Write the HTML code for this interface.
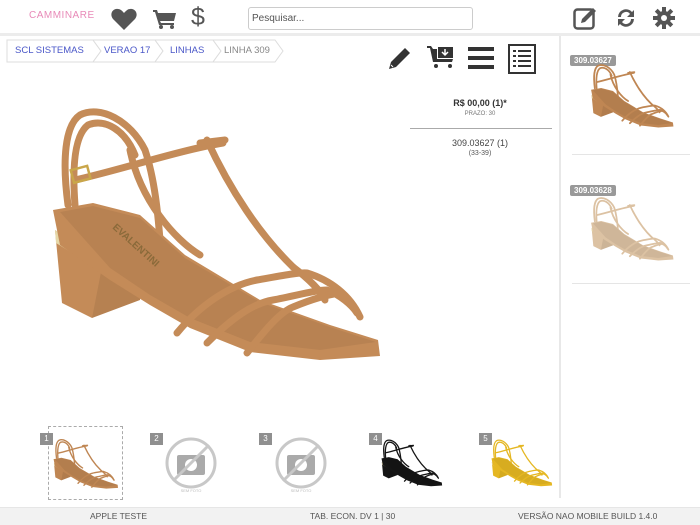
<!DOCTYPE html>
<html><head><meta charset="utf-8"><style>
*{margin:0;padding:0;box-sizing:border-box}
body{width:700px;height:525px;background:#fff;font-family:"Liberation Sans",sans-serif;position:relative;overflow:hidden}
.abs{position:absolute}
.hdr{left:0;top:0;width:700px;height:36px;background:#fff;border-bottom:3px solid #ececec}
.search{left:248px;top:7px;width:225px;height:23px;border:1px solid #ccc;border-radius:3px;font-size:10px;color:#555;padding:5px 3px}
.bc{top:40px;height:22px;font-size:9.5px;line-height:22px;color:#4a57c8}
.side{left:559px;top:36px;width:2px;height:462px;background:#e8e8e8}
.tag{background:#999;color:#fff;font-size:8px;font-weight:bold;border-radius:2px;padding:1px 4px}
.num{background:#8f8f8f;color:#fff;font-size:8px;width:13px;height:12px;text-align:center;line-height:12px}
.foot{left:0;top:507px;width:700px;height:18px;background:#f2f2f2;border-top:1px solid #e6e6e6;font-size:8.5px;color:#555;line-height:17px}
</style></head><body>
<svg width="0" height="0" style="position:absolute"><defs>
<symbol id="shoe" viewBox="45 100 345 270">
<g fill="none" stroke="currentColor" stroke-width="7" stroke-linecap="round">
<path d="M68 205C62 160 65 125 80 115C100 105 130 120 145 150C155 180 158 215 160 240"/>
<path d="M75 205C72 165 75 135 88 125C105 118 125 130 135 155"/>
<path d="M75 180C120 170 180 150 223 143"/>
</g>
<path d="M55 230L103 262 140 250 140 300 92 318 62 303z" fill="currentColor"/>
<path d="M103 262L140 250 140 300 92 318z" fill="#000" opacity=".07"/>
<path d="M55 230L103 262 103 272 56 243z" fill="#e6d8a8"/>
<path d="M53 210L93 203 140 215 185 255 260 300 330 325 378 340 380 356 320 360 250 352 190 328 150 305 110 280 60 245z" fill="currentColor"/>
<path d="M60 212L93 206 140 218 185 258 260 302 330 327 376 342 320 350 250 342 190 318 150 295 110 268z" fill="#000" opacity=".06"/>
<g fill="none" stroke="currentColor" stroke-width="7" stroke-linecap="round">
<path d="M130 150C140 200 175 240 200 255"/>
<path d="M207 140C230 190 260 235 293 267"/>
<path d="M200 143L225 140"/>
<path d="M177 333C200 305 230 285 257 280C280 276 300 272 307 273C330 280 350 295 360 317"/>
<path d="M207 343C235 315 255 303 273 300C295 296 315 290 327 290C340 295 352 305 357 313"/>
<path d="M247 353C265 330 280 312 293 307C310 300 325 295 340 293"/>
<path d="M293 267C310 280 320 290 325 300"/>
</g>
</symbol></defs></svg>

<div class="abs hdr"></div>
<div class="abs" style="left:29px;top:10px;font-size:10px;color:#e88ab8;letter-spacing:.5px">CAMMINARE</div>
<svg class="abs" style="left:111px;top:8px" width="26" height="22" viewBox="0 0 26 22"><path d="M13 22L2 11C-2 6 2 0 7 1c3 0 5 3 6 4 1-1 3-4 6-4 5-1 9 5 5 10z" fill="#555"/></svg>
<svg class="abs" style="left:153px;top:9px" width="24" height="20" viewBox="0 0 24 20"><path d="M0 1h4l1 3h18l-2 8H7l1 2h13v2H6L2 3H0z" fill="#555"/><circle cx="8" cy="18" r="2" fill="#555"/><circle cx="19" cy="18" r="2" fill="#555"/></svg>
<div class="abs" style="left:191px;top:3px;font-size:25px;color:#555">$</div>
<div class="abs search">Pesquisar...</div>
<svg class="abs" style="left:573px;top:6px" width="26" height="24" viewBox="0 0 26 24"><rect x="1.5" y="3.5" width="19" height="19" rx="3" fill="none" stroke="#555" stroke-width="2.5"/><path d="M8 17l1-4 11-11 3 3-11 11z" fill="#555"/></svg>
<svg class="abs" style="left:614px;top:6px" width="24" height="24" viewBox="0 0 24 24"><path d="M4 11a8 8 0 0 1 14-5l2-2v7h-7l3-3a5 5 0 0 0-9 3zM20 13a8 8 0 0 1-14 5l-2 2v-7h7l-3 3a5 5 0 0 0 9-3z" fill="#555"/></svg>
<svg class="abs" style="left:653px;top:7px" width="22" height="22" viewBox="0 0 22 22"><g fill="#555"><circle cx="11" cy="11" r="7"/><rect x="9" y="0" width="4" height="22"/><rect x="0" y="9" width="22" height="4"/><rect x="9" y="0" width="4" height="22" transform="rotate(45 11 11)"/><rect x="9" y="0" width="4" height="22" transform="rotate(-45 11 11)"/></g><circle cx="11" cy="11" r="3" fill="#fff"/></svg>

<svg class="abs" style="left:6px;top:39px" width="280" height="24"><g fill="#fff" stroke="#ddd"><path d="M1 1h86l8 11-8 11H1z"/><path d="M87 1h62l8 11-8 11H87l8-11z"/><path d="M149 1h58l8 11-8 11h-58l8-11z"/><path d="M207 1h62l8 11-8 11h-62l8-11z"/></g></svg>
<div class="abs bc" style="left:15px">SCL SISTEMAS</div>
<div class="abs bc" style="left:104px">VERAO 17</div>
<div class="abs bc" style="left:170px">LINHAS</div>
<div class="abs bc" style="left:224px;color:#888">LINHA 309</div>

<svg class="abs" style="left:387px;top:45px" width="26" height="26" viewBox="0 0 26 26"><path d="M2 24l2-7L18 3l5 5L9 22z" fill="#333"/><path d="M4 20l2 2" stroke="#fff"/></svg>
<svg class="abs" style="left:427px;top:44px" width="28" height="26" viewBox="0 0 28 26"><path d="M0 2h4l2 3h4v10h16l-1 3H6L3 4H0z" fill="#333"/><rect x="11" y="3" width="15" height="11" fill="#333"/><path d="M18 5v6M15 8l3 3 3-3" stroke="#fff" stroke-width="1.5" fill="none"/><circle cx="9" cy="22" r="2" fill="#333"/><circle cx="23" cy="22" r="2" fill="#333"/></svg>
<svg class="abs" style="left:468px;top:47px" width="26" height="22"><rect y="0" width="26" height="4" fill="#333"/><rect y="9" width="26" height="4" fill="#333"/><rect y="18" width="26" height="4" fill="#333"/></svg>
<svg class="abs" style="left:508px;top:44px" width="28" height="30"><rect x="1" y="1" width="26" height="28" fill="none" stroke="#333" stroke-width="2"/><g fill="#333"><rect x="5" y="6" width="3" height="2"/><rect x="10" y="6" width="13" height="2"/><rect x="5" y="11" width="3" height="2"/><rect x="10" y="11" width="13" height="2"/><rect x="5" y="16" width="3" height="2"/><rect x="10" y="16" width="13" height="2"/><rect x="5" y="21" width="3" height="2"/><rect x="10" y="21" width="13" height="2"/></g></svg>

<div class="abs" style="left:410px;top:98px;width:140px;text-align:center;font-size:9px;font-weight:bold;color:#333">R$ 00,00 (1)*</div>
<div class="abs" style="left:410px;top:111px;width:140px;text-align:center;font-size:6px;color:#777">PRAZO: 30</div>
<div class="abs" style="left:410px;top:128px;width:142px;height:1px;background:#aaa"></div>
<div class="abs" style="left:410px;top:138px;width:140px;text-align:center;font-size:9px;color:#444">309.03627 (1)</div>
<div class="abs" style="left:410px;top:150px;width:140px;text-align:center;font-size:7px;color:#555">(33-39)</div>

<!-- main shoe -->
<svg class="abs" style="left:45px;top:100px;color:#c48b58" width="345" height="270"><use href="#shoe"/></svg>
<svg class="abs" style="left:0;top:0" width="400" height="380">
<rect x="72" y="168" width="17" height="13" fill="none" stroke="#c9a64a" stroke-width="2.5" transform="rotate(-15 80 174)"/>
<text x="112" y="228" font-size="10" font-weight="bold" fill="#8a6a3a" transform="rotate(42 112 228)">EVALENTINI</text>
</svg>

<div class="abs side"></div>
<div class="abs" style="left:570px;top:50px"><span class="tag">309.03627</span></div>
<svg class="abs" style="left:585px;top:62px;color:#bf8653" width="95" height="68"><use href="#shoe"/></svg>
<div class="abs" style="left:572px;top:154px;width:118px;height:1px;background:#e5e5e5"></div>
<div class="abs" style="left:570px;top:180px"><span class="tag">309.03628</span></div>
<svg class="abs" style="left:585px;top:195px;color:#dcc2a3" width="95" height="68"><use href="#shoe"/></svg>
<div class="abs" style="left:572px;top:283px;width:118px;height:1px;background:#e5e5e5"></div>

<!-- thumbnails -->
<div class="abs" style="left:48px;top:426px;width:75px;height:74px;border:1px dashed #aaa"></div>
<div class="abs num" style="left:40px;top:433px">1</div>
<div class="abs num" style="left:150px;top:433px">2</div>
<div class="abs num" style="left:259px;top:433px">3</div>
<div class="abs num" style="left:369px;top:433px">4</div>
<div class="abs num" style="left:479px;top:433px">5</div>
<svg class="abs" style="left:52px;top:437px;color:#bf8653" width="68" height="54"><use href="#shoe"/></svg>
<svg class="abs" style="left:380px;top:437px;color:#151515" width="64" height="52"><use href="#shoe"/></svg>
<svg class="abs" style="left:490px;top:437px;color:#e5b722" width="64" height="52"><use href="#shoe"/></svg>
<svg class="abs" style="left:163px;top:437px" width="56" height="56" viewBox="0 0 56 56"><circle cx="28" cy="26" r="24" fill="none" stroke="#c8c8c8" stroke-width="3"/><rect x="14" y="18" width="28" height="20" rx="2" fill="#aaa"/><circle cx="28" cy="28" r="6" fill="#fff"/><path d="M10 44L46 8" stroke="#c8c8c8" stroke-width="3"/><text x="28" y="55" font-size="4" fill="#bbb" text-anchor="middle">SEM FOTO</text></svg>
<svg class="abs" style="left:273px;top:437px" width="56" height="56" viewBox="0 0 56 56"><circle cx="28" cy="26" r="24" fill="none" stroke="#c8c8c8" stroke-width="3"/><rect x="14" y="18" width="28" height="20" rx="2" fill="#aaa"/><circle cx="28" cy="28" r="6" fill="#fff"/><path d="M10 44L46 8" stroke="#c8c8c8" stroke-width="3"/><text x="28" y="55" font-size="4" fill="#bbb" text-anchor="middle">SEM FOTO</text></svg>

<div class="abs foot">
<span class="abs" style="left:90px">APPLE TESTE</span>
<span class="abs" style="left:310px">TAB. ECON. DV 1 | 30</span>
<span class="abs" style="left:518px">VERSÃO NAO MOBILE BUILD 1.4.0</span>
</div>
</body></html>
